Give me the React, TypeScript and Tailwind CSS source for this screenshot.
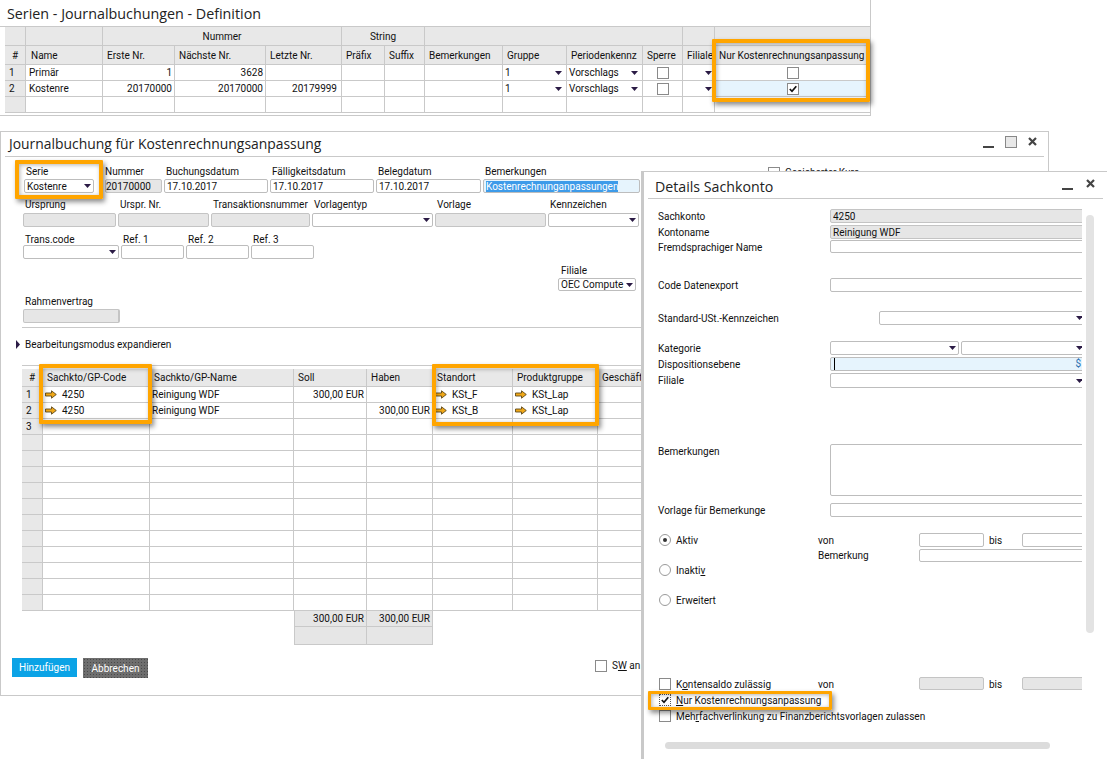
import type { ReactNode } from "react";

const LINE = "border-[#c9c9c9]";

function Arrow() {
  return <svg width="7" height="4" viewBox="0 0 7 4" className="shrink-0"><polygon points="0,0 7,0 3.5,4" fill="#2b1b45" /></svg>;
}

function RowArrow() {
  return (
    <svg width="12" height="9" viewBox="0 0 12 9" className="shrink-0">
      <path d="M0.5 3 H6.5 V0.8 L11.3 4.5 L6.5 8.2 V6 H0.5 Z" fill="#f0a818" stroke="#5d4a1c" strokeWidth="0.9" />
    </svg>
  );
}

function CloseX() {
  return <svg width="9" height="9" viewBox="0 0 9 9"><path d="M1 1 L8 8 M8 1 L1 8" stroke="#444" strokeWidth="2.2" /></svg>;
}

function Check({ checked, dotted }: { checked?: boolean; dotted?: boolean }) {
  return (
    <span className={`flex h-[12px] w-[12px] shrink-0 items-center justify-center border bg-white ${dotted ? "border-dotted border-[#555]" : "border-[#8a8a8a]"}`}>
      {checked && (
        <svg width="10" height="10" viewBox="0 0 10 10"><path d="M1.8 5 L4 7.3 L8.3 2.2" fill="none" stroke="#111" strokeWidth="1.7" /></svg>
      )}
    </span>
  );
}

function Radio({ on }: { on?: boolean }) {
  return (
    <span className="flex h-[12px] w-[12px] shrink-0 items-center justify-center rounded-full border border-[#9a9a9a] bg-white">
      {on && <span className="h-[4px] w-[4px] rounded-full bg-[#333]" />}
    </span>
  );
}

// input-like box, size comes in through className
function Box({ className = "", gray, drop, children }: { className?: string; gray?: boolean; drop?: boolean; children?: ReactNode }) {
  return (
    <div className={`flex shrink-0 items-center overflow-hidden rounded-[2px] border pl-[2px] pr-[2px] whitespace-nowrap ${gray ? "border-[#c4c4c4] bg-[#e6e6e6]" : "border-[#bdbdbd] bg-white"} ${className}`}>
      <span className="flex-1 overflow-hidden">{children}</span>
      {drop && <Arrow />}
    </div>
  );
}

function Labeled({ label, labelH, className, children }: { label: string; labelH: string; className?: string; children: ReactNode }) {
  return (
    <div className={`flex flex-col ${className ?? ""}`}>
      {/* w-0 so a long caption doesn't push the field next to it */}
      <div className={`${labelH} w-0 whitespace-nowrap px-[2px] leading-[15px]`}>{label}</div>
      {children}
    </div>
  );
}

function Head({ children, className = "" }: { children?: ReactNode; className?: string }) {
  return <div className={`flex items-center overflow-hidden whitespace-nowrap border-r border-b bg-[#e8e8e8] px-[4px] ${LINE} ${className}`}>{children}</div>;
}

function Td({ children, className = "" }: { children?: ReactNode; className?: string }) {
  return <div className={`flex items-center overflow-hidden whitespace-nowrap border-r border-b px-[2px] ${LINE} ${className}`}>{children}</div>;
}

function Highlight({ className }: { className: string }) {
  return <div className={`absolute rounded-[1px] border-[4px] border-[#ffa500] shadow-[2px_3px_5px_rgba(0,0,0,0.45),inset_1px_1px_4px_rgba(0,0,0,0.3)] ${className}`} />;
}

function SeriesWindow() {
  const rows = [
    { no: "1", name: "Primär", a: "1", b: "3628", c: "", on: false },
    { no: "2", name: "Kostenre", a: "20170000", b: "20170000", c: "20179999", on: true },
  ];
  return (
    <section className={`absolute left-0 top-0 h-[116px] w-[871px] border-r border-b bg-white ${LINE}`}>
      <h1 className="h-[26px] pl-[7px] pt-[3px] font-['Open_Sans',sans-serif] text-[14.3px] leading-[22px] text-[#222]">Serien - Journalbuchungen - Definition</h1>
      <div className={`border-t pl-[5px] ${LINE}`}>
        <div className="grid grid-cols-[21px_77px_72px_91px_76px_43px_40px_78px_64px_76px_40px_32px_155px] grid-rows-[19px_19px_16px_16px_16px]">
          <Head />
          <Head />
          <Head className="col-span-3 justify-center">Nummer</Head>
          <Head className="col-span-2 justify-center">String</Head>
          <Head className="col-span-4" />
          <Head />
          <Head className="border-r-0" />

          <Head className="justify-center">#</Head>
          <Head className="pl-[5px]">Name</Head>
          <Head>Erste Nr.</Head>
          <Head>Nächste Nr.</Head>
          <Head>Letzte Nr.</Head>
          <Head>Präfix</Head>
          <Head>Suffix</Head>
          <Head>Bemerkungen</Head>
          <Head>Gruppe</Head>
          <Head>Periodenkennz</Head>
          <Head>Sperre</Head>
          <Head className="px-[1px]">Filiale</Head>
          <Head className="border-r-0">Nur Kostenrechnungsanpassung</Head>

          {rows.map((r) => (
            <div key={r.no} className="contents">
              <Td className="bg-[#e8e8e8] pl-[4px]">{r.no}</Td>
              <Td className="pl-[3px]">{r.name}</Td>
              <Td className="justify-end">{r.a}</Td>
              <Td className="justify-end">{r.b}</Td>
              <Td className="justify-end pr-[4px]">{r.c}</Td>
              <Td />
              <Td />
              <Td />
              <Td className="justify-between pr-[4px]">1<Arrow /></Td>
              <Td className="justify-between pr-[4px]">Vorschlags<Arrow /></Td>
              <Td className="justify-center"><Check /></Td>
              <Td className="justify-end pr-[2px]"><Arrow /></Td>
              <Td className={`justify-center border-r-0 ${r.on ? "bg-[#e6f4fd]" : ""}`}><Check checked={r.on} /></Td>
            </div>
          ))}

          <Td className="bg-[#e8e8e8]" />
          {Array.from({ length: 11 }, (_, i) => <Td key={i} />)}
          <Td className="border-r-0" />
        </div>
      </div>
    </section>
  );
}

function JournalWindow() {
  const lines = [
    { no: "1", soll: "300,00 EUR", haben: "", ort: "KSt_F" },
    { no: "2", soll: "", haben: "300,00 EUR", ort: "KSt_B" },
  ];
  return (
    <section className={`absolute left-0 top-[131px] h-[565px] w-[1049px] border bg-white ${LINE}`}>
      <div className="flex h-[24px] items-center pl-[8px] pr-[11px]">
        <h2 className="flex-1 font-['Open_Sans',sans-serif] text-[13.9px] text-[#222]">Journalbuchung für Kostenrechnungsanpassung</h2>
        <span className="mt-[6px] mr-[11px] h-[2px] w-[11px] bg-[#444]" />
        <span className="-mt-[5px] mr-[11px] h-[12px] w-[12px] border border-[#888] bg-[#e8e8e8]" />
        <span className="-mt-[5px] flex"><CloseX /></span>
      </div>
      <div className={`mx-[4px] border-t ${LINE}`} />

      <div className="ml-[22px] mt-[7px] flex gap-[2px]">
        <Labeled label="Serie" labelH="h-[15px]" className="ml-[1px] mr-[9px]"><Box drop className="h-[14px] w-[70px]">Kostenre</Box></Labeled>
        <Labeled label="Nummer" labelH="h-[15px] !px-0"><Box gray className="h-[14px] w-[57px] !pl-0">20170000</Box></Labeled>
        <Labeled label="Buchungsdatum" labelH="h-[15px]"><Box className="h-[14px] w-[104px]">17.10.2017</Box></Labeled>
        <Labeled label="Fälligkeitsdatum" labelH="h-[15px]"><Box className="h-[14px] w-[104px]">17.10.2017</Box></Labeled>
        <Labeled label="Belegdatum" labelH="h-[15px]"><Box className="h-[14px] w-[105px]">17.10.2017</Box></Labeled>
        <Labeled label="Bemerkungen" labelH="h-[15px]">
          <Box className="h-[14px] w-[157px] !bg-[#e6f4fd]"><span className="bg-[#3d9be9] text-white">Kostenrechnunganpassungen</span></Box>
        </Labeled>
      </div>

      <div className="ml-[22px] mt-[4px] flex gap-[2px]">
        <Labeled label="Ursprung" labelH="h-[16px]"><Box gray className="h-[14px] w-[93px]" /></Labeled>
        <Labeled label="Urspr. Nr." labelH="h-[16px]"><Box gray className="h-[14px] w-[91px]" /></Labeled>
        <Labeled label="Transaktionsnummer" labelH="h-[16px]"><Box gray className="h-[14px] w-[99px]" /></Labeled>
        <Labeled label="Vorlagentyp" labelH="h-[16px]"><Box drop className="h-[14px] w-[121px]" /></Labeled>
        <Labeled label="Vorlage" labelH="h-[16px]"><Box gray className="h-[14px] w-[111px]" /></Labeled>
        <Labeled label="Kennzeichen" labelH="h-[16px]"><Box drop className="h-[14px] w-[91px]" /></Labeled>
      </div>

      <div className="ml-[22px] mt-[5px] flex gap-[2px]">
        <Labeled label="Trans.code" labelH="h-[13px]"><Box drop className="h-[14px] w-[96px]" /></Labeled>
        <Labeled label="Ref. 1" labelH="h-[13px]"><Box className="h-[14px] w-[63px]" /></Labeled>
        <Labeled label="Ref. 2" labelH="h-[13px]"><Box className="h-[14px] w-[63px]" /></Labeled>
        <Labeled label="Ref. 3" labelH="h-[13px]"><Box className="h-[14px] w-[63px]" /></Labeled>
      </div>

      <Labeled label="Filiale" labelH="h-[14px] !px-[3px] !leading-[13px]" className="ml-[557px] mt-[5px] w-[78px]">
        <Box drop className="h-[13px] w-[78px]">OEC Compute</Box>
      </Labeled>

      <Labeled label="Rahmenvertrag" labelH="h-[15px]" className="ml-[22px] mt-[3px] w-[97px]">
        <Box gray className="h-[14px] w-[97px] border-r-2" />
      </Labeled>

      <div className={`ml-[21px] mt-[4px] border-t ${LINE}`} />

      <div className="ml-[15px] mt-[8px] flex h-[16px] items-center gap-[5px]">
        <svg width="4" height="9" viewBox="0 0 4 9"><polygon points="0,0 4,4.5 0,9" fill="#2b1b45" /></svg>
        <span>Bearbeitungsmodus expandieren</span>
      </div>

      <div className={`ml-[21px] mt-[13px] border-t ${LINE}`} />
      <div className="ml-[21px] mt-[3px] grid grid-cols-[21px_107px_144px_73px_66px_80px_85px_100px_300px]">
        <Head className="h-[18px] justify-center">#</Head>
        <Head className="h-[18px]">Sachkto/GP-Code</Head>
        <Head className="h-[18px]">Sachkto/GP-Name</Head>
        <Head className="h-[18px]">Soll</Head>
        <Head className="h-[18px]">Haben</Head>
        <Head className="h-[18px] px-[2px]">Standort</Head>
        <Head className="h-[18px]">Produktgruppe</Head>
        <Head className="h-[18px]">Geschäft</Head>
        <Head className="h-[18px]" />

        {lines.map((l) => (
          <div key={l.no} className="contents">
            <Td className="h-[16px] bg-[#e8e8e8] pl-[4px]">{l.no}</Td>
            <Td className="h-[16px] gap-[5px]"><RowArrow />4250</Td>
            <Td className="h-[16px]">Reinigung WDF</Td>
            <Td className="h-[16px] justify-end">{l.soll}</Td>
            <Td className="h-[16px] justify-end">{l.haben}</Td>
            <Td className="h-[16px] gap-[5px]"><RowArrow />{l.ort}</Td>
            <Td className="h-[16px] gap-[5px]"><RowArrow />KSt_Lap</Td>
            <Td className="h-[16px]" />
            <Td className="h-[16px]" />
          </div>
        ))}

        {Array.from({ length: 12 }, (_, i) => (
          <div key={i} className="contents">
            <Td className="h-[16px] bg-[#e8e8e8] pl-[4px]">{i === 0 ? "3" : ""}</Td>
            <Td className="h-[16px]" />
            <Td className="h-[16px]" />
            <Td className="h-[16px]" />
            <Td className="h-[16px]" />
            <Td className="h-[16px]" />
            <Td className="h-[16px]" />
            <Td className="h-[16px]" />
            <Td className="h-[16px]" />
          </div>
        ))}

        <div className="col-span-3" />
        <Td className="h-[16px] justify-end !border-l bg-[#e6e6e6]">300,00 EUR</Td>
        <Td className="h-[16px] justify-end bg-[#e6e6e6]">300,00 EUR</Td>
        <div className="col-span-4" />
        <div className="col-span-3" />
        <Td className="h-[18px] !border-l bg-[#e6e6e6]" />
        <Td className="h-[18px] bg-[#e6e6e6]" />
      </div>

      <div className="ml-[11px] mt-[13px] flex h-[19px] items-start">
        <button className="h-[19px] w-[65px] bg-[#0ba3e6] text-white">Hinzufügen</button>
        <button className="ml-[6px] h-[20px] w-[65px] bg-[#6e6e6e] bg-[radial-gradient(#4a4a4a_0.6px,transparent_0.7px)] bg-[length:3px_3px] text-white">Abbrechen</button>
        <div className="ml-[447px] flex items-center gap-[5px]"><Check /><span className="whitespace-nowrap">S<u>W</u> an</span></div>
      </div>

      <div className="absolute left-[767px] top-[33px] flex items-center gap-[5px]"><Check /><span>Gesicherter Kurs</span></div>
    </section>
  );
}

function DetailRow({ label, className, children }: { label: string; className: string; children: ReactNode }) {
  return (
    <div className={`flex ${className}`}>
      <div className="w-[172px] shrink-0 whitespace-nowrap leading-[16px]">{label}</div>
      {children}
    </div>
  );
}

function DetailsWindow() {
  return (
    <section className={`absolute left-[641px] top-[171px] h-[600px] w-[470px] border-t border-l-[3px] bg-white ${LINE}`}>
      <div className="relative h-[26px]">
        <h2 className="pl-[11px] pt-[5px] font-['Open_Sans',sans-serif] text-[14.2px] leading-[20px] text-[#222]">Details Sachkonto</h2>
        <span className="absolute left-[418px] top-[16px] h-[2px] w-[11px] bg-[#444]" />
        <span className="absolute left-[442px] top-[7px] flex"><CloseX /></span>
      </div>
      <div className={`ml-[4px] mr-[8px] border-t ${LINE}`} />

      {/* fields run on to the right and get cut by the wrapper, as in the app */}
      <div className="w-[438px] overflow-hidden pl-[14px]">
        <DetailRow label="Sachkonto" className="mt-[10px] h-[14px]"><Box gray className="h-[14px] w-[256px]">4250</Box></DetailRow>
        <DetailRow label="Kontoname" className="mt-[2px] h-[14px]"><Box gray className="h-[14px] w-[256px]">Reinigung WDF</Box></DetailRow>
        <DetailRow label="Fremdsprachiger Name" className="mt-[1px] h-[13px]"><Box className="h-[13px] w-[256px]" /></DetailRow>
        <DetailRow label="Code Datenexport" className="mt-[25px] h-[14px]"><Box className="h-[14px] w-[256px]" /></DetailRow>
        <DetailRow label="Standard-USt.-Kennzeichen" className="mt-[19px] h-[14px]"><Box drop className="ml-[49px] h-[14px] w-[207px]" /></DetailRow>
        <DetailRow label="Kategorie" className="mt-[16px] h-[14px]">
          <Box drop className="h-[14px] w-[129px]" />
          <Box drop className="ml-[2px] h-[14px] w-[125px]" />
        </DetailRow>
        <DetailRow label="Dispositionsebene" className="mt-[2px] h-[14px]">
          <Box className="h-[14px] w-[256px] !bg-[#e6f4fd]">
            <span className="flex items-center justify-between pl-[1px] pr-[2px]"><span className="h-[12px] w-px bg-black" /><span className="leading-[12px] text-[#2a6fb0]">$</span></span>
          </Box>
        </DetailRow>
        <DetailRow label="Filiale" className="mt-[2px] h-[15px]"><Box drop className="h-[15px] w-[256px]" /></DetailRow>
        <DetailRow label="Bemerkungen" className="mt-[56px] h-[52px]"><Box className="h-[52px] w-[256px]" /></DetailRow>
        <DetailRow label="Vorlage für Bemerkunge" className="mt-[7px] h-[14px]"><Box className="h-[14px] w-[256px]" /></DetailRow>

        <div className="mt-[16px] flex">
          <div className="flex w-[160px] shrink-0 flex-col gap-[16px]">
            <div className="flex h-[14px] items-center gap-[5px] pl-[1px]"><Radio on />Aktiv</div>
            <div className="flex h-[14px] items-center gap-[5px] pl-[1px]"><Radio /><span>Inakti<u>v</u></span></div>
            <div className="flex h-[14px] items-center gap-[5px] pl-[1px]"><Radio />Erweitert</div>
          </div>
          <div className="flex flex-col">
            <div className="flex h-[14px] items-center">
              <span className="w-[101px] shrink-0">von</span>
              <Box className="h-[14px] w-[65px]" />
              <span className="w-[38px] shrink-0 pl-[5px]">bis</span>
              <Box className="h-[14px] w-[70px]" />
            </div>
            <div className="mt-[2px] flex h-[13px] items-center">
              <span className="w-[101px] shrink-0">Bemerkung</span>
              <Box className="h-[13px] w-[180px]" />
            </div>
          </div>
        </div>

        <div className="mt-[70px] flex h-[13px] items-center">
          <div className="flex w-[160px] shrink-0 items-center gap-[5px] pl-[1px]"><Check /><span className="pt-[1px]">K<u>o</u>ntensaldo zulässig</span></div>
          <span className="w-[101px] shrink-0 pt-[1px]">von</span>
          <Box gray className="h-[13px] w-[65px]" />
          <span className="w-[38px] shrink-0 pl-[5px] pt-[1px]">bis</span>
          <Box gray className="h-[13px] w-[70px]" />
        </div>
        <div className="mt-[3px] flex h-[14px] items-center gap-[5px] pl-[1px]"><Check checked dotted /><span className="pt-[1px]"><u>N</u>ur Kostenrechnungsanpassung</span></div>
        <div className="mt-[2px] flex h-[14px] items-center gap-[5px] pl-[1px]"><Check /><span className="pt-[1px]">Meh<u>r</u>fachverlinkung zu Finanzberichtsvorlagen zulassen</span></div>
      </div>

      <div className="absolute left-[442px] top-[43px] h-[418px] w-[8px] rounded-full bg-[#e3e3e3]" />
      <div className="absolute left-[21px] top-[570px] h-[7px] w-[385px] rounded-full bg-[#dcdcdc]" />
    </section>
  );
}

export default function App() {
  return (
    <div className="relative h-[759px] w-[1107px] overflow-hidden bg-white font-['Roboto','Liberation_Sans',sans-serif] text-[10px] text-[#111]">
      <SeriesWindow />
      <JournalWindow />
      <DetailsWindow />

      <Highlight className="left-[712px] top-[39px] h-[63px] w-[158px]" />
      <Highlight className="left-[15px] top-[160px] h-[39px] w-[88px]" />
      <Highlight className="left-[39px] top-[364px] h-[60px] w-[113px]" />
      <Highlight className="left-[432px] top-[364px] h-[62px] w-[167px]" />
      <Highlight className="left-[648px] top-[691px] h-[19px] w-[184px] !border-[3px]" />
    </div>
  );
}
